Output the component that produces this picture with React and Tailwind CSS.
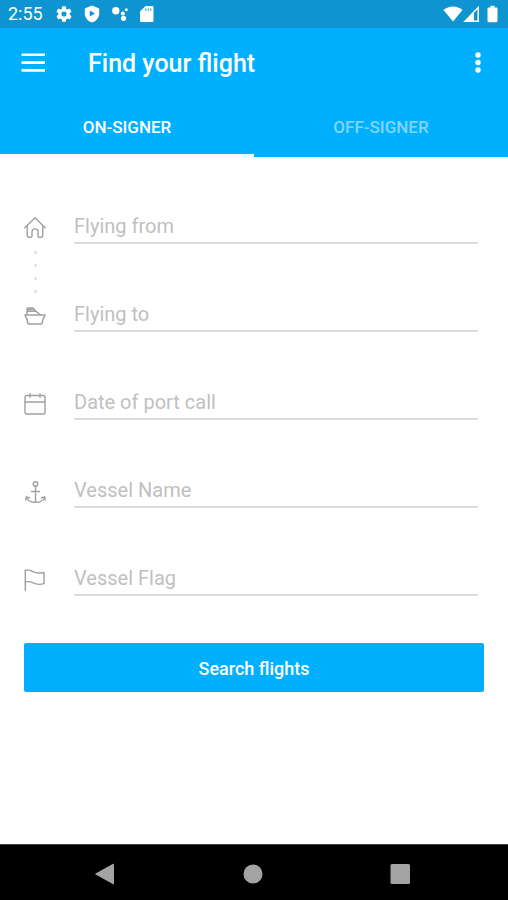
import { useState } from "react";

const HomeIcon = () => (
    <svg viewBox="0 0 22 22" className="w-[22px] h-[22px]" fill="none" stroke="currentColor" strokeWidth="1.4" strokeLinejoin="round" strokeLinecap="round">
        <path d="M.8 10.7 11 .8l10.2 9.9" />
        <path d="M3.2 9v9.300c0 1.200.8 2 2 2h1.600c.7 0 1.200-.5 1.200-1.200v-4.400c0-1.600 1.200-2.800 3-2.800s3 1.200 3 2.800v4.400c0 .7.5 1.200 1.200 1.200h1.600c1.200 0 2-.8 2-2V9" />
    </svg>
);

const ShipIcon = () => (
    <svg viewBox="0 0 22 22" className="w-[22px] h-[22px]" fill="none" stroke="currentColor" strokeWidth="1.5" strokeLinejoin="round" strokeLinecap="round">
        <path d="M1 10h20c-.2 1.500-1 2.400-1.800 3.400l-1 4.400c-.1.700-.6 1.100-1.300 1.100H5c-.7 0-1.200-.4-1.300-1.100L2.700 13.500C1.900 12.500 1.200 11.500 1 10z" />
        <path d="M3 9.500V6.200h8.800l4.200 3.300" />
        <path d="M3.200 6V2.900h6L11.500 6" />
        <path d="M4 4.500h5" />
    </svg>
);

const CalendarIcon = () => (
    <svg viewBox="0 0 22 22" className="w-[22px] h-[22px]" fill="none" stroke="currentColor" strokeWidth="1.4" strokeLinejoin="round" strokeLinecap="round">
        <rect x="1" y="2.500" width="20" height="18.500" rx="1.800" />
        <path d="M1 9h20M6 .8v3.600M16 .8v3.600" />
    </svg>
);

const AnchorIcon = () => (
    <svg viewBox="0 0 22 22" className="w-[22px] h-[22px]" fill="none" stroke="currentColor" strokeWidth="1.4" strokeLinejoin="round" strokeLinecap="round">
        <circle cx="11.500" cy="2.900" r="2.200" />
        <path d="M11.500 5v16.500M7.500 10.500h8" />
        <path d="M2.500 17c1.500 2.800 5 4.300 9 4.300s7.500-1.500 9-4.300" />
        <path d="M1.800 19l.4-3 3.300.8M21.200 19l-.4-3-3.300.8" />
    </svg>
);

const FlagIcon = () => (
    <svg viewBox="0 0 22 22" className="w-[22px] h-[22px]" fill="none" stroke="currentColor" strokeWidth="1.4" strokeLinejoin="round" strokeLinecap="round">
        <path d="M1.300 21.300V1" />
        <path d="M1.300 1.700c2-.8 4.500-.8 7 .6 3.500 1.900 7 2.200 11.700 1.200v11.200c-4.500 1.300-8 .8-11.500-1-2.500-1.200-5-1.300-7.200-.5" />
    </svg>
);

const fields = [
    { id: "from", label: "Flying from", icon: HomeIcon },
    { id: "to", label: "Flying to", icon: ShipIcon },
    { id: "date", label: "Date of port call", icon: CalendarIcon },
    { id: "vessel", label: "Vessel Name", icon: AnchorIcon },
    { id: "flag", label: "Vessel Flag", icon: FlagIcon },
];

const tabs = ["ON-SIGNER", "OFF-SIGNER"];

const StatusBar = () => (
    <div className="flex h-7 items-center justify-between bg-[#0d94d1] pl-2 pr-[6px] text-white">
        <div className="flex items-center gap-3">
            <span className="mr-px text-lg leading-7">2:55</span>
            <svg viewBox="2 2 20 20" className="h-4 w-4" fill="currentColor">
                <path d="M19.140 12.940c.04-.3.06-.61.06-.94s-.02-.64-.07-.94l2.030-1.580a.49.49 0 0 0 .12-.61l-1.920-3.320a.49.49 0 0 0-.59-.22l-2.390.96a7 7 0 0 0-1.620-.94l-.36-2.540a.48.48 0 0 0-.48-.41h-3.840a.48.48 0 0 0-.47.41l-.36 2.540a7.200 7.200 0 0 0-1.620.94l-2.390-.96a.48.48 0 0 0-.59.22L2.740 8.870a.48.48 0 0 0 .12.61l2.030 1.580a6 6 0 0 0 0 1.880l-2.030 1.580a.49.49 0 0 0-.12.61l1.920 3.320c.12.22.37.29.59.22l2.390-.96c.5.38 1.030.7 1.620.94l.36 2.540c.05.24.24.41.48.41h3.840c.24 0 .44-.17.47-.41l.36-2.540a7 7 0 0 0 1.620-.94l2.390.96c.22.08.47 0 .59-.22l1.920-3.320a.48.48 0 0 0-.12-.61zM12 15.200a3.200 3.200 0 1 1 0-6.400 3.200 3.200 0 0 1 0 6.400" />
            </svg>
            <svg viewBox="0 0 16 18" className="h-[18px] w-4" fill="currentColor" fillRule="evenodd">
                <path d="M8 .5 15.200 3.500v5c0 4.200-3 7.700-7.200 9-4.200-1.300-7.200-4.800-7.200-9v-5zM5.800 5.500v6L11 8.500z" />
            </svg>
            <svg viewBox="0 0 16 16" className="h-4 w-4" fill="currentColor">
                <circle cx="3.800" cy="4.800" r="3.700" />
                <circle cx="10.800" cy="7.400" r="2" />
                <circle cx="14.300" cy="3.700" r="1.500" />
                <circle cx="11.500" cy="12.300" r="2.600" />
            </svg>
            <svg viewBox="0 0 16 18" className="h-[18px] w-4" fill="currentColor" fillRule="evenodd">
                <path d="M5.500 1H12c1 0 1.500.5 1.500 1.500v13c0 1-.5 1.500-1.500 1.500H1.500C.5 17 0 16.500 0 15.500V6.500zM5.300 3.500v2.300h1V3.500zM7.800 3.500v2.300h1V3.500zM10.300 3.500v2.300h1V3.500z" />
            </svg>
        </div>
        <div className="flex items-center">
            <svg viewBox="0 0 20 18" className="h-[18px] w-5" fill="currentColor">
                <path d="M.5 5C6 .3 14 .3 19.500 5L10 16.500z" />
            </svg>
            <svg viewBox="0 0 17 18" className="h-[18px] w-[17px]" fill="none" stroke="currentColor" strokeWidth="1.500">
                <path d="M2 16.200 15.200 2.500v13.700z" />
                <path d="M11 7v9.500h-9.500z" fill="currentColor" stroke="none" />
            </svg>
            <svg viewBox="0 0 22 18" className="h-[18px] w-[22px]" fill="currentColor">
                <path d="M10.500.8h4v1.700h2c.7 0 1 .3 1 1v12.500c0 .7-.4 1.200-1.200 1.200H8.700c-.8 0-1.200-.5-1.200-1.200V3.500c0-.7.3-1 1-1h2z" />
            </svg>
        </div>
    </div>
);

const NavBar = () => (
    <nav className="flex h-14 items-center justify-between border-t border-[#444444] bg-black pt-[2px] pr-24 pl-[92px] text-[#a3a3a3]">
        <button type="button" aria-label="Back">
            <svg viewBox="0 0 24 24" className="h-6 w-6" fill="currentColor">
                <path d="M22 2.300v19.400c0 .5-.4.700-.8.500L3.600 12.600c-.5-.3-.5-.9 0-1.200L21.200 1.800c.4-.2.800 0 .8.500" />
            </svg>
        </button>
        <button type="button" aria-label="Home">
            <svg viewBox="0 0 24 24" className="h-6 w-6" fill="currentColor">
                <circle cx="13" cy="12" r="9.500" />
            </svg>
        </button>
        <button type="button" aria-label="Recent apps">
            <svg viewBox="0 0 24 24" className="h-6 w-6" fill="currentColor">
                <rect x="2.500" y="2" width="19.500" height="20" rx="1.500" />
            </svg>
        </button>
    </nav>
);

const App = () => {
    const [activeTab, setActiveTab] = useState("ON-SIGNER");

    return (
        <div className="flex min-h-screen flex-col bg-white font-[Roboto,sans-serif]">
            <StatusBar />
            <header className="bg-[#00b0ff] text-white">
                <div className="flex h-[70px] items-center pr-[18px] pl-5">
                    <button type="button" aria-label="Menu">
                        <svg viewBox="0 0 26 24" className="h-6 w-[26px]" fill="currentColor">
                            <path d="M1.500 2.500h23.500v2.600H1.500zM1.500 10.300h23.500v2.600H1.500zM1.500 18.100h23.500v2.600H1.500z" />
                        </svg>
                    </button>
                    <h1 className="ml-[42px] flex-1 pt-[2px] text-[25px] font-medium">Find your flight</h1>
                    <button type="button" aria-label="More options">
                        <svg viewBox="0 0 24 24" className="h-6 w-6" fill="currentColor">
                            <circle cx="12" cy="4" r="2.700" />
                            <circle cx="12" cy="11.500" r="2.700" />
                            <circle cx="12" cy="19" r="2.700" />
                        </svg>
                    </button>
                </div>
                <div role="tablist" className="grid grid-cols-2">
                    {tabs.map((tab) => (
                        <button
                            key={tab}
                            type="button"
                            role="tab"
                            aria-selected={activeTab === tab}
                            onClick={() => setActiveTab(tab)}
                            className={
                                activeTab === tab
                                    ? "h-[59px] border-b-3 border-[#f5fbfd] pt-1 text-[17px] font-medium text-white"
                                    : "h-[59px] border-b-3 border-transparent pt-1 text-[17px] font-medium text-[#80d6ff]"
                            }
                        >
                            {tab}
                        </button>
                    ))}
                </div>
            </header>
            <main className="flex-1 px-6 pt-[55px]">
                <form onSubmit={(e) => e.preventDefault()}>
                    {fields.map(({ id, label, icon: Icon }, i) => (
                        <div key={id}>
                            {i === 1 && (
                                <div className="flex h-14 w-[22px] flex-col items-center justify-center gap-[10px]">
                                    <span className="h-[3px] w-[3px] bg-[#e4e4e4]" />
                                    <span className="h-[3px] w-[3px] bg-[#e4e4e4]" />
                                    <span className="h-[3px] w-[3px] bg-[#e4e4e4]" />
                                    <span className="h-[3px] w-[3px] bg-[#e4e4e4]" />
                                </div>
                            )}
                            {i > 1 && <div className="h-14" />}
                            <div className="flex items-center gap-7 pr-[6px]">
                                <label htmlFor={id} aria-label={label} className="text-[#a0a0a0]">
                                    <Icon />
                                </label>
                                <input
                                    id={id}
                                    type="text"
                                    placeholder={label}
                                    className="h-8 min-w-0 flex-1 border-b-2 border-[#dcdcdc] pb-[3px] text-xl text-[#444444] outline-none placeholder:text-[#c0c0c0]"
                                />
                            </div>
                        </div>
                    ))}
                    <button type="submit" className="mt-[47px] h-[49px] w-full rounded-xs bg-[#00b0ff] pt-[2px] text-lg font-medium text-white">
                        Search flights
                    </button>
                </form>
            </main>
            <NavBar />
        </div>
    );
};

export default App;
